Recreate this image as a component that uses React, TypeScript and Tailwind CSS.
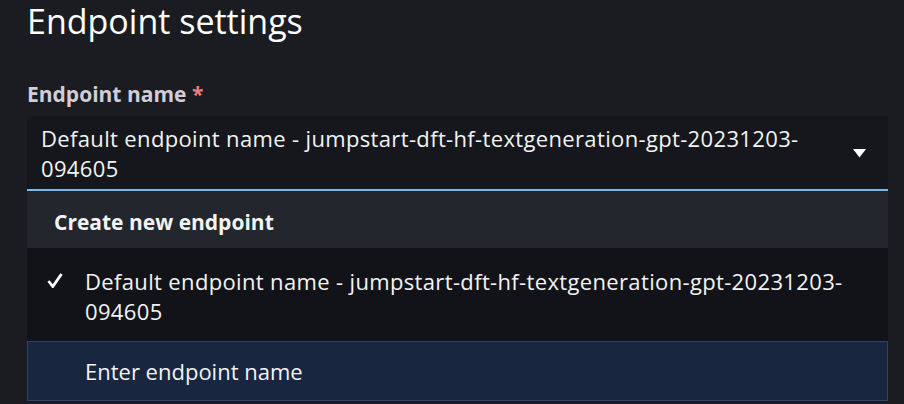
import React from "react";

export default function App() {
  const font = { fontFamily: "'Open Sans', 'Noto Sans', sans-serif" };
  return (
    <div
      className="w-[904px] h-[404px] overflow-hidden bg-[#1b1c21] relative font-['Open_Sans',sans-serif]"
      style={font}
    >
      <div className="w-[888px] pl-[27px] pt-[1px]">
        <h1 className="text-[34px] leading-[40px] text-white font-normal">Endpoint settings</h1>
        <div className="mt-[38px] text-[21px] leading-[30px] font-bold text-[#cfcedb]">
          Endpoint name <span className="text-[#eb7b7b]">*</span>
        </div>
        <div className="mt-[7px] bg-[#16171c] rounded-t-[4px] border-b-2 border-[#7fb6e6] pl-[14px] pr-[22px] pt-[7px] pb-[6px] flex items-center">
          <div className="flex-1 text-[22px] leading-[30px] tracking-[0.35px] text-[#f2f3f3]">
            Default endpoint name - jumpstart-dft-hf-textgeneration-gpt-20231203-
            <br />
            094605
          </div>
          <svg width="13" height="9" viewBox="0 0 13 9" className="ml-4 shrink-0">
            <polygon points="0,0 13,0 6.5,8.5" fill="#ffffff" />
          </svg>
        </div>
        <div className="flex flex-col">
          <div className="bg-[#23262d] pl-[27px] pt-[16px] pb-[11px] text-[21px] leading-[30px] font-bold text-[#f2f3f3]">
            Create new endpoint
          </div>
          <div className="bg-[#121318] pt-[18px] pb-[15px] flex items-start text-[22px] leading-[30px] tracking-[0.35px] text-[#f2f3f3]">
            <div className="w-[58px] shrink-0 flex justify-start pl-[20px] pt-[7px]">
              <svg width="16" height="15" viewBox="0 0 16 15">
                <polyline points="1.5,8 5.8,13.5 14.5,1" fill="none" stroke="#ffffff" strokeWidth="2.8" strokeLinejoin="miter" />
              </svg>
            </div>
            <div>
              Default endpoint name - jumpstart-dft-hf-textgeneration-gpt-20231203-
              <br />
              094605
            </div>
          </div>
          <div className="bg-[#192640] border border-[#2b4468] pt-[14px] pb-[14px] pl-[57px] text-[22px] leading-[30px] text-[#f2f3f3]">
            Enter endpoint name
          </div>
        </div>
      </div>
    </div>
  );
}
